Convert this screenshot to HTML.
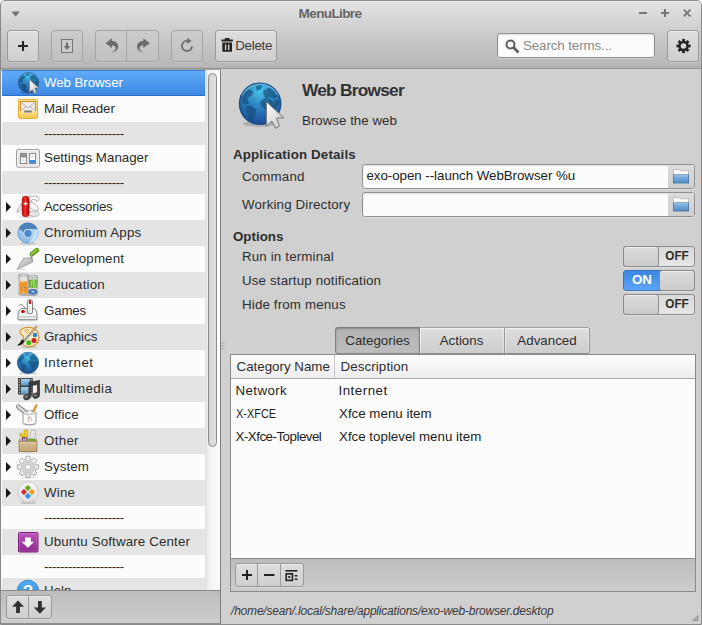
<!DOCTYPE html>
<html>
<head>
<meta charset="utf-8">
<title>MenuLibre</title>
<style>
*{box-sizing:border-box;margin:0;padding:0}
html,body{width:702px;height:625px;overflow:hidden;background:#fff}
body{font-family:"Liberation Sans",sans-serif;font-size:13.33px;color:#2e2e2e;position:relative}
.abs{position:absolute}
#win{position:absolute;left:0;top:0;width:702px;height:625px;border:1px solid #8a8a8a;border-radius:5px 5px 0 0;background:#d0d0d0;overflow:hidden}
#head{position:absolute;left:0;top:0;width:700px;height:67px;background:linear-gradient(#e3e3e3 0,#cbcbcb 33px,#b8b8b8 63px,#afafaf 67px);border-top:1px solid #ececec}
#headline{position:absolute;left:0;top:68px;width:700px;height:1px;background:#989898}
#title{position:absolute;left:0;top:5px;width:658px;text-align:center;font-weight:bold;font-size:13.6px;letter-spacing:-0.65px;color:#646464;line-height:16px;text-shadow:0 1px 0 rgba(255,255,255,.35)}
.btn{position:absolute;border:1px solid #9a9a9a;border-radius:3px;background:linear-gradient(#dedede,#cfcfcf);box-shadow:inset 0 1px 0 rgba(255,255,255,.45),0 1px 0 rgba(255,255,255,.25)}
.btn.dis{background:linear-gradient(#cdcdcd,#c0c0c0);border-color:#a4a4a4;box-shadow:0 1px 0 rgba(255,255,255,.2)}
.btn svg{position:absolute;left:-1px;top:-1px;overflow:visible}
.row{position:absolute;left:1px;width:204px;height:26px;line-height:26px;white-space:nowrap}
.row.sep{height:23px;line-height:24px;letter-spacing:-0.45px}
.row.g{background:#e4e4e4}
.row.w{background:#fcfcfc}
.row.sel{background:linear-gradient(#60aaf8,#3d89e5);border-bottom:1px solid #2a6ec6;border-top:1px solid #3a7ed2;line-height:24px}
.row.sel span{color:#fff;letter-spacing:-0.08px}
.row.sel .ic{top:0}
.row span{position:absolute;left:42px;top:0;color:#2c2c2c}
.row .ic{position:absolute;left:14px;top:1px;width:24px;height:24px}
.row .ar{position:absolute;left:4px;top:7.7px;width:0;height:0;border-left:5.6px solid #161616;border-top:5px solid transparent;border-bottom:5px solid transparent}
.lbl{position:absolute;white-space:nowrap;line-height:16px;color:#2e2e2e}
.b{font-weight:bold}
.entry{position:absolute;left:361px;width:333px;height:25px;border:1px solid #8f8f8f;border-radius:3px;background:#fcfcfc;box-shadow:inset 0 1px 2px rgba(0,0,0,.12),0 1px 0 rgba(255,255,255,.35)}
.entry .sec{position:absolute;right:0;top:0;width:26px;height:23px;background:linear-gradient(#dcdcdc,#cfcfcf);border-radius:0 2px 2px 0}
.sw{position:absolute;left:622px;width:72px;height:21px;border:1px solid #8d8d8d;border-radius:3px;background:linear-gradient(#d9d9d9,#e6e6e6);font-weight:bold;font-size:13.33px;line-height:18px;color:#2e2e2e;box-shadow:0 1px 0 rgba(255,255,255,.35)}
.sw .kn{position:absolute;top:-1px;width:36px;height:21px;border:1px solid #8d8d8d;border-radius:3px;background:linear-gradient(#dcdcdc,#cbcbcb);box-shadow:inset 0 1px 0 rgba(255,255,255,.5)}
.sw .tx{position:absolute;top:0;width:36px;text-align:center}
.tab{position:absolute;top:326px;height:27px;border:1px solid #929292;line-height:25px;text-align:center;color:#2e2e2e;background:linear-gradient(#dedede,#cdcdcd);border-color:#a0a0a0 #989898 #8e8e8e #989898;box-shadow:inset 0 1px 0 rgba(255,255,255,.6),inset 1px 0 0 rgba(255,255,255,.45),inset -1px 0 0 rgba(255,255,255,.3)}
</style>
</head>
<body>
<svg width="0" height="0" style="position:absolute"><defs>
<radialGradient id="gGlobe" cx="0.5" cy="0.18" r="0.85"><stop offset="0" stop-color="#4cc4ea"/><stop offset="0.4" stop-color="#2f8ac6"/><stop offset="0.75" stop-color="#2262a8"/><stop offset="1" stop-color="#1c4888"/></radialGradient>
<linearGradient id="gCur" x1="0" y1="0" x2="1" y2="1"><stop offset="0" stop-color="#ffffff"/><stop offset="1" stop-color="#c4c4c4"/></linearGradient>
<linearGradient id="gMail" x1="0" y1="0" x2="0" y2="1"><stop offset="0" stop-color="#f8cf58"/><stop offset="1" stop-color="#f0b028"/></linearGradient>
<linearGradient id="gTray" x1="0" y1="0" x2="0" y2="1"><stop offset="0" stop-color="#fce9a0"/><stop offset="1" stop-color="#f4c445"/></linearGradient>
<linearGradient id="gRed" x1="0" y1="0" x2="1" y2="0"><stop offset="0" stop-color="#c00808"/><stop offset="0.45" stop-color="#f03030"/><stop offset="1" stop-color="#b00000"/></linearGradient>
<radialGradient id="gChr" cx="0.5" cy="0.3" r="0.8"><stop offset="0" stop-color="#b8d8f2"/><stop offset="1" stop-color="#7fb2e0"/></radialGradient>
<linearGradient id="gFold" x1="0" y1="0" x2="0" y2="1"><stop offset="0" stop-color="#8dbbe6"/><stop offset="1" stop-color="#4f8cc4"/></linearGradient>
<linearGradient id="gPurp" x1="0" y1="0" x2="0" y2="1"><stop offset="0" stop-color="#bb55b8"/><stop offset="1" stop-color="#8d2690"/></linearGradient>
<linearGradient id="gBox" x1="0" y1="0" x2="0" y2="1"><stop offset="0" stop-color="#dcc6a0"/><stop offset="1" stop-color="#c0a070"/></linearGradient>
<linearGradient id="gHelp" x1="0" y1="0" x2="0" y2="1"><stop offset="0" stop-color="#56b0f4"/><stop offset="1" stop-color="#2a7fd4"/></linearGradient>
<linearGradient id="gGear" x1="0" y1="0" x2="0" y2="1"><stop offset="0" stop-color="#f7f7f7"/><stop offset="1" stop-color="#dedede"/></linearGradient>
<linearGradient id="gBlade" x1="0" y1="0" x2="1" y2="1"><stop offset="0" stop-color="#e2e2e2"/><stop offset="1" stop-color="#a8a8a8"/></linearGradient>
<linearGradient id="gFilm" x1="0" y1="0" x2="0" y2="1"><stop offset="0" stop-color="#a8d2ee"/><stop offset="1" stop-color="#5a96c4"/></linearGradient>
</defs></svg>
<div id="win">
<div id="head"></div>
<div id="title">MenuLibre</div>
<!-- titlebar glyphs -->
<svg class="abs" style="left:0;top:0" width="700" height="28">
<path d="M10.4 10.4h8.4l-4.2 5.4z" fill="#767676"/>
<path d="M638 12h8" stroke="#767676" stroke-width="2"/>
<path d="M660 12h8M664 8v8" stroke="#767676" stroke-width="2"/>
<path d="M682.8 8.7l6.6 6.6M689.4 8.7l-6.6 6.6" stroke="#767676" stroke-width="1.9"/>
</svg>

<!-- toolbar buttons -->
<div class="btn" style="left:6px;top:29px;width:32px;height:32px"><svg width="30" height="30"><path d="M11 16h10M16 11v10" stroke="#262626" stroke-width="2.1"/></svg></div>
<div class="btn dis" style="left:50px;top:29px;width:32px;height:32px"><svg width="30" height="30"><rect x="10.5" y="9.5" width="11" height="13" fill="#cbcbcb" stroke="#747474"/><path d="M15 12.5h2v3.5h2.4l-3.4 3.7-3.4-3.7h2.4z" fill="#6e6e6e"/></svg></div>
<div class="btn dis" style="left:94px;top:29px;width:64px;height:32px"><svg width="62" height="30">
<path d="M31.5 0v32" stroke="#a4a4a4"/>
<path d="M10.5 13.2L16.9 8.2V10.9C21 10.9 23.4 13.5 23.2 16.9C23 19.8 20.5 21.8 16.4 22.3C19.3 21.3 20.9 19.6 20.6 17.9C20.3 16.2 19 15.3 16.9 15.3V18.1Z" fill="#6c6c6c"/>
<path d="M10.5 13.2L16.9 8.2V10.9C21 10.9 23.4 13.5 23.2 16.9C23 19.8 20.5 21.8 16.4 22.3C19.3 21.3 20.9 19.6 20.6 17.9C20.3 16.2 19 15.3 16.9 15.3V18.1Z" fill="#6c6c6c" transform="translate(65.2 0) scale(-1 1)"/>
</svg></div>
<div class="btn dis" style="left:170px;top:29px;width:32px;height:32px"><svg width="30" height="30"><path d="M16.3 10.85A5.05 5.05 0 1 0 21.03 16.4" fill="none" stroke="#6e6e6e" stroke-width="1.9"/><path d="M16.1 7.8L20.6 10.9L16.1 13.9z" fill="#6e6e6e"/></svg></div>
<div class="btn" style="left:214px;top:29px;width:62px;height:32px"><svg width="60" height="30"><path d="M6.4 9.4h11.5v2.2h-11.5zM9.8 8h4.8v1.5h-4.8zM7.3 12.5h9.7v9.2h-9.7z" fill="#262626"/><path d="M10.6 14.5v5.5M13.7 14.5v5.5" stroke="#d6d6d6" stroke-width="1.3"/></svg><span class="lbl" style="left:19.3px;top:7px;color:#3a3a3a;letter-spacing:-0.3px">Delete</span></div>
<!-- search -->
<div class="abs" style="left:496px;top:32px;width:158px;height:25px;border:1px solid #8f8f8f;border-radius:3px;background:#fcfcfc;box-shadow:inset 0 1px 2px rgba(0,0,0,.12),0 1px 0 rgba(255,255,255,.35)">
<svg class="abs" style="left:5px;top:3px" width="18" height="18"><circle cx="7.5" cy="7.5" r="4" fill="none" stroke="#5e5e5e" stroke-width="2"/><path d="M10.5 10.5l5 5" stroke="#5e5e5e" stroke-width="2.6"/></svg>
<span class="lbl" style="left:25px;top:4px;color:#8a8a8a;letter-spacing:-0.1px">Search terms...</span></div>
<div class="btn" style="left:666px;top:29px;width:32px;height:32px"><svg width="30" height="30"><g transform="translate(16.5 16)" fill="#262626"><circle r="4" fill="none" stroke="#262626" stroke-width="2.4"/><rect x="-1.4" y="-7.1" width="2.8" height="3" transform="rotate(0)"/><rect x="-1.4" y="-7.1" width="2.8" height="3" transform="rotate(45)"/><rect x="-1.4" y="-7.1" width="2.8" height="3" transform="rotate(90)"/><rect x="-1.4" y="-7.1" width="2.8" height="3" transform="rotate(135)"/><rect x="-1.4" y="-7.1" width="2.8" height="3" transform="rotate(180)"/><rect x="-1.4" y="-7.1" width="2.8" height="3" transform="rotate(225)"/><rect x="-1.4" y="-7.1" width="2.8" height="3" transform="rotate(270)"/><rect x="-1.4" y="-7.1" width="2.8" height="3" transform="rotate(315)"/></g></svg></div>

<!-- left list -->
<div class="abs" style="left:0;top:67px;width:700px;height:1px;background:#949494"></div>
<div class="abs" style="left:0;top:68px;width:220px;height:555px;background:#a2a2a2;border-left:1px solid #929292"></div>
<div class="abs" id="list" style="left:0;top:69px;width:219px;height:520px;background:#fcfcfc;overflow:hidden">
<div class="row sel" style="top:0px"><svg class="ic" viewBox="0 0 24 24" ><ellipse cx="12.5" cy="21.49" rx="8.67" ry="1.43" fill="rgba(0,0,0,.16)"/><circle cx="12.5" cy="11.6" r="10.2" fill="url(#gGlobe)" stroke="#1d4f88" stroke-width="0.71"/><path d="M4.03 8.85 L4.95 5.99 L7.3 4.66 L8.93 5.79 L8.22 7.42 L6.58 8.13 L5.87 9.76 L6.79 11.4 L5.36 11.6 L3.73 10.48z" fill="#134a72" opacity="0.6" stroke="#134a72" stroke-width="0.51" stroke-linejoin="round"/><path d="M10.56 3.03 L13.11 2.52 L12.91 4.15 L11.07 4.87z" fill="#134a72" opacity="0.6" stroke="#134a72" stroke-width="0.51" stroke-linejoin="round"/><path d="M5.87 13.03 L8.01 12.62 L10.26 14.46 L9.85 16.8 L8.42 19.86 L7.5 19.35 L6.99 16.8 L5.77 14.97z" fill="#134a72" opacity="0.6" stroke="#134a72" stroke-width="0.51" stroke-linejoin="round"/><path d="M14.23 5.38 L16.89 3.95 L18.93 5.07 L20.86 7.93 L19.44 8.85 L17.29 8.13 L15.66 8.85 L14.54 7.42z" fill="#134a72" opacity="0.6" stroke="#134a72" stroke-width="0.51" stroke-linejoin="round"/><path d="M12.91 10.68 L14.74 9.05 L17.6 9.56 L19.44 11.6 L20.15 13.54 L18.62 16.7 L16.58 17.72 L15.56 14.66 L14.23 13.33 L12.91 12.11z" fill="#134a72" opacity="0.6" stroke="#134a72" stroke-width="0.51" stroke-linejoin="round"/><path d="M19.64 9.97 L21.78 9.76 L21.58 12.11 L20.35 13.03z" fill="#134a72" opacity="0.6" stroke="#134a72" stroke-width="0.51" stroke-linejoin="round"/><path d="M3.73 7.32A9.79 9.79 0 0 1 21.27 7.32" fill="none" stroke="rgba(160,220,250,.45)" stroke-width="0.61"/><path d="M13.3 8.2 L13.3 21.62 L16.27 18.87 L18.42 22.83 L20.51 21.51 L18.91 17.27 L22.87 17.05z" fill="url(#gCur)" stroke="#767676" stroke-width="0.8" stroke-linejoin="round"/></svg><span>Web Browser</span></div>
<div class="row w" style="top:26px"><svg class="ic" viewBox="0 0 24 24" ><rect x="2.5" y="2.4" width="19" height="19" rx="1.6" fill="url(#gMail)" stroke="#e0a21c" stroke-width="0.9"/>
<rect x="3.4" y="3.3" width="17.2" height="17.2" rx="1" fill="none" stroke="#fdeeb0" stroke-width="0.7"/>
<rect x="4.6" y="4.6" width="14.8" height="10" fill="#eeeeee" stroke="#cf8a28" stroke-width="1"/>
<path d="M5.5 5.5l6.5 5.5 6.5-5.5M5.5 13.5l5-4.2M18.5 13.5l-5-4.2" fill="none" stroke="#9c9c9c" stroke-width="0.8"/>
<path d="M3.3 13.9h4.8l0.6 2h6.6l0.6-2h4.8v6.7h-17.4z" fill="url(#gTray)"/>
<path d="M8.1 13.6h7.8l-0.6 2.1h-6.6z" fill="#7a7a7a"/><path d="M8.7 15.2h6.6l-0.2 0.7h-6.2z" fill="#c8c8c8"/></svg><span style="letter-spacing:-0.1px">Mail Reader</span></div>
<div class="row g sep" style="top:52px"><span>--------------------</span></div>
<div class="row w" style="top:75px"><svg class="ic" viewBox="0 0 24 24" ><rect x="1" y="20.5" width="22" height="1.5" rx="0.7" fill="rgba(0,0,0,.12)"/>
<rect x="0.5" y="3.5" width="23" height="17.5" rx="1.5" fill="#e6e6e6" stroke="#9c9c9c"/>
<rect x="1.5" y="4.5" width="21" height="15.5" rx="1" fill="none" stroke="#f8f8f8"/>
<rect x="4.5" y="7.5" width="6" height="10" fill="#fcfcfc" stroke="#8a8a8a"/><rect x="5" y="8" width="5" height="3.5" fill="#909090"/>
<rect x="13.5" y="7.5" width="6" height="10" fill="#fcfcfc" stroke="#8a8a8a"/><rect x="14" y="14" width="5" height="3.1" fill="#3f8ee0"/>
<rect x="6.3" y="13" width="2.4" height="2.4" fill="#e0e0e0"/><rect x="15.3" y="9.3" width="2.4" height="2.4" fill="#e0e0e0"/></svg><span>Settings Manager</span></div>
<div class="row g sep" style="top:101px"><span>--------------------</span></div>
<div class="row w" style="top:124px"><i class="ar"></i><svg class="ic" viewBox="0 0 24 24" ><ellipse cx="11" cy="22" rx="8" ry="1" fill="rgba(0,0,0,.13)"/>
<path d="M5.4 8.4L1.1 16V17.6L6.5 13.6z" fill="#f4f4f4" stroke="#909090" stroke-width="0.7" stroke-linejoin="round"/>
<path d="M13 1.2H21C22.8 1.3 23.3 3 22.7 4.6C22.2 5.8 21.2 6.5 20.4 6.4C20.6 5.4 20 4.7 19 4.7H16.5C15.6 4.9 15.1 5.6 15 6.8H13z" fill="#f6f6f6" stroke="#949494" stroke-width="0.7" stroke-linejoin="round"/>
<path d="M13 7.5L15.9 7.1C19 8.5 21.5 11 22.3 13.8L22 15.6C19.5 15.8 17.5 15.3 15.5 14L13 12z" fill="#f6f6f6" stroke="#949494" stroke-width="0.7" stroke-linejoin="round"/>
<path d="M13 16.9H21C22.5 17 23.2 18 23.1 19.2C23 20.3 22.6 20.9 21.5 21L16.8 21.2L13 20z" fill="#f6f6f6" stroke="#949494" stroke-width="0.7" stroke-linejoin="round"/>
<path d="M17.5 19h3.5" stroke="#b0b0b0" stroke-width="0.7"/>
<rect x="6.1" y="1" width="7" height="20.8" rx="3.5" fill="url(#gRed)" stroke="#a80000" stroke-width="0.5"/>
<path d="M9.6 6.6v4M7.6 8.6h4" stroke="#fff" stroke-width="1.2"/></svg><span style="letter-spacing:-0.32px">Accessories</span></div>
<div class="row g" style="top:150px"><i class="ar"></i><svg class="ic" viewBox="0 0 24 24" ><ellipse cx="12" cy="22.3" rx="8" ry="1.2" fill="rgba(0,0,0,.15)"/>
<circle cx="12" cy="12" r="10.2" fill="url(#gChr)" stroke="#6b9dce" stroke-width="0.8"/>
<path d="M2.8 7.5a10.2 10.2 0 0 1 18.6 0.5h-9.4a4.8 4.8 0 0 0-4.5 3.2z" fill="#4f82b8"/>
<path d="M21.4 8a10.2 10.2 0 0 1-8.4 14.2l4-7.5a4.8 4.8 0 0 0 0-5z" fill="#c4def4"/>
<circle cx="12" cy="12.5" r="4.6" fill="#d8e9f8"/>
<circle cx="12" cy="12.5" r="3.7" fill="#4f8ad0"/></svg><span style="letter-spacing:0.2px">Chromium Apps</span></div>
<div class="row w" style="top:176px"><i class="ar"></i><svg class="ic" viewBox="0 0 24 24" ><ellipse cx="6" cy="22.3" rx="5" ry="0.8" fill="rgba(0,0,0,.12)"/>
<path d="M1.1 22.3L7.6 11.3L15.5 10.7L16.8 13.3L16.6 15.1z" fill="url(#gBlade)" stroke="#8c8c8c" stroke-width="0.7" stroke-linejoin="round"/>
<path d="M15.8 11.5L15.3 7.4" stroke="#8a8a8a" stroke-width="1.5" fill="none" stroke-linecap="round"/>
<path d="M16 7L20.8 3.1" stroke="#5c9414" stroke-width="4.6" stroke-linecap="round"/>
<path d="M16.2 6.4L20.6 2.8" stroke="#8fc838" stroke-width="2.2" stroke-linecap="round"/>
<circle cx="15.6" cy="7.6" r="0.8" fill="#e8e8e8" stroke="#808080" stroke-width="0.5"/></svg><span style="letter-spacing:0.14px">Development</span></div>
<div class="row g" style="top:202px"><i class="ar"></i><svg class="ic" viewBox="0 0 24 24" ><ellipse cx="12" cy="21.8" rx="10" ry="1.3" fill="rgba(0,0,0,.2)"/>
<path d="M12.4 3.2h9v12l-0.8 1.5c1 1 1.2 2.5 1 4.3c-0.3 1-2 1.3-4.7 1.3s-4.4-0.3-4.7-1.3z" fill="#dadada" stroke="#848484" stroke-width="0.7" stroke-linejoin="round"/>
<rect x="13.2" y="6.6" width="7.5" height="8.2" fill="#5cac24"/><path d="M14.8 14.5l1.2-7.5M17 7l0.6 7.5M19.3 14.5l-0.8-7.5" stroke="#b4e884" stroke-width="0.9" fill="none"/>
<ellipse cx="16.9" cy="18.7" rx="4.3" ry="2.7" fill="#2c6cb4"/><rect x="15.3" y="17.7" width="3.4" height="2" fill="#a8c8ea"/>
<ellipse cx="16.9" cy="3.3" rx="4.5" ry="1" fill="#f0f0f0" stroke="#848484" stroke-width="0.6"/>
<rect x="3.1" y="1.6" width="8.8" height="19.6" rx="1" fill="#e2e2e2" stroke="#848484" stroke-width="0.7"/>
<rect x="3.8" y="8" width="7.4" height="12.4" fill="#f0921c"/><rect x="3.8" y="8" width="7.4" height="1.3" fill="#f8bc64"/><rect x="5.5" y="9.3" width="3" height="11.1" fill="#f6ac44" opacity="0.7"/>
<circle cx="7.3" cy="12.2" r="0.6" fill="#668"/><circle cx="8.6" cy="14.5" r="0.6" fill="#668"/><circle cx="6.5" cy="16.6" r="0.6" fill="#668"/><circle cx="6" cy="14.3" r="0.5" fill="#668"/>
<ellipse cx="7.5" cy="2" rx="4.8" ry="1" fill="#f4f4f4" stroke="#848484" stroke-width="0.6"/><path d="M2.2 1.8l1 0.6" stroke="#848484" stroke-width="0.6"/></svg><span style="letter-spacing:0.18px">Education</span></div>
<div class="row w" style="top:228px"><i class="ar"></i><svg class="ic" viewBox="0 0 24 24" ><ellipse cx="11.5" cy="21.5" rx="9.5" ry="1" fill="rgba(0,0,0,.12)"/>
<path d="M3.4 5.8c2.2-0.6 4.6 0.6 5.4 3.6" fill="none" stroke="#707070" stroke-width="0.8"/>
<path d="M5.6 9.6h13c1.4 0.8 2.4 3.5 2.4 6.5v4.6h-19v-4.6c0-3 1.4-5.8 3.6-6.5z" fill="#f4f4f4" stroke="#747474" stroke-width="0.9" stroke-linejoin="round"/>
<rect x="3" y="16.9" width="17" height="1.9" fill="#cfcfcf"/>
<rect x="11.3" y="1" width="5.2" height="13.6" rx="1.6" fill="#f6f6f6" stroke="#747474" stroke-width="0.9"/>
<rect x="12.5" y="7" width="1.2" height="7" fill="#d8d8d8"/>
<rect x="12.9" y="1.3" width="2.2" height="3.7" rx="0.5" fill="#d01414"/>
<ellipse cx="7" cy="12.5" rx="2" ry="1.5" fill="#c40808"/></svg><span style="letter-spacing:-0.2px">Games</span></div>
<div class="row g" style="top:254px"><i class="ar"></i><svg class="ic" viewBox="0 0 24 24" ><ellipse cx="13" cy="22" rx="8" ry="1" fill="rgba(0,0,0,.15)"/>
<path d="M13 2.2c6 0 10 4.5 10 10 0 6-4.5 9.5-10 9.5-4 0-6.5-2-6.5-4.5 0-2 1-3 1-5 0-2.5-3.5-2-3.5-5 0-3 4-5 9-5z" fill="#f6e7be" stroke="#cc9430" stroke-width="1.1"/>
<ellipse cx="10.8" cy="5.9" rx="1.7" ry="1.5" fill="#fcfcfc" stroke="#cc9430" stroke-width="0.9"/>
<circle cx="19" cy="10" r="2.3" fill="#3c78d8"/><circle cx="18" cy="15.6" r="2.5" fill="#d81c1c"/><circle cx="12.8" cy="17.8" r="2.5" fill="#3cb81c"/>
<path d="M20.8 1.3l-13.3 15.2" stroke="#7a7a7a" stroke-width="2"/><path d="M20.8 1.3l-7 8" stroke="#c8902c" stroke-width="1.6"/><path d="M20.8 1.3l-13.3 15.2" stroke="#e8e8e8" stroke-width="0.6"/>
<path d="M8.5 16l-2.5-1.5c-1.5 1.5-1.5 4-5 5.8 3 0.8 6.5-1 7.5-4.3z" fill="#1c1c1c"/></svg><span>Graphics</span></div>
<div class="row w" style="top:280px"><i class="ar"></i><svg class="ic" viewBox="0 0 24 24" ><ellipse cx="12" cy="22.08" rx="9.01" ry="1.48" fill="rgba(0,0,0,.16)"/><circle cx="12" cy="11.8" r="10.6" fill="url(#gGlobe)" stroke="#1d4f88" stroke-width="0.74"/><path d="M3.2 8.94 L4.16 5.97 L6.59 4.59 L8.29 5.76 L7.55 7.45 L5.85 8.2 L5.11 9.89 L6.06 11.59 L4.58 11.8 L2.88 10.63z" fill="#134a72" opacity="0.6" stroke="#134a72" stroke-width="0.53" stroke-linejoin="round"/><path d="M9.99 2.9 L12.64 2.37 L12.42 4.06 L10.52 4.8z" fill="#134a72" opacity="0.6" stroke="#134a72" stroke-width="0.53" stroke-linejoin="round"/><path d="M5.11 13.28 L7.34 12.86 L9.67 14.77 L9.24 17.21 L7.76 20.39 L6.81 19.86 L6.28 17.21 L5 15.3z" fill="#134a72" opacity="0.6" stroke="#134a72" stroke-width="0.53" stroke-linejoin="round"/><path d="M13.8 5.33 L16.56 3.85 L18.68 5.02 L20.69 7.98 L19.21 8.94 L16.98 8.2 L15.29 8.94 L14.12 7.45z" fill="#134a72" opacity="0.6" stroke="#134a72" stroke-width="0.53" stroke-linejoin="round"/><path d="M12.42 10.85 L14.33 9.15 L17.3 9.68 L19.21 11.8 L19.95 13.81 L18.36 17.1 L16.24 18.16 L15.18 14.98 L13.8 13.6 L12.42 12.33z" fill="#134a72" opacity="0.6" stroke="#134a72" stroke-width="0.53" stroke-linejoin="round"/><path d="M19.42 10.1 L21.65 9.89 L21.43 12.33 L20.16 13.28z" fill="#134a72" opacity="0.6" stroke="#134a72" stroke-width="0.53" stroke-linejoin="round"/><path d="M2.88 7.35A10.18 10.18 0 0 1 21.12 7.35" fill="none" stroke="rgba(160,220,250,.45)" stroke-width="0.64"/></svg><span style="letter-spacing:0.55px">Internet</span></div>
<div class="row g" style="top:306px"><i class="ar"></i><svg class="ic" viewBox="0 0 24 24" ><rect x="2" y="1" width="14.8" height="16.6" fill="#3e3e3e"/>
<rect x="4.9" y="1.9" width="9" height="6.7" fill="url(#gFilm)"/><rect x="4.9" y="10" width="9" height="6.9" fill="url(#gFilm)"/>
<path d="M3.4 2v15M15.4 2v15" stroke="#e0e0e0" stroke-width="0.9" stroke-dasharray="1.3 1.3"/>
<rect x="17.3" y="7.8" width="3.8" height="8" fill="rgba(255,255,255,.55)"/>
<path d="M12.8 5.3L23.7 3.2V18.5H21.3V7.6L15.3 8.8V19.8H12.8z" fill="#3c3c3c" stroke="#2a2a2a" stroke-width="0.5" stroke-linejoin="round"/>
<ellipse cx="10.9" cy="20.1" rx="3.5" ry="2.7" fill="#444" stroke="#2a2a2a" stroke-width="0.5" transform="rotate(-15 10.9 20.1)"/>
<ellipse cx="19.9" cy="18.7" rx="3.4" ry="2.7" fill="#444" stroke="#2a2a2a" stroke-width="0.5" transform="rotate(-15 19.9 18.7)"/>
<ellipse cx="10.3" cy="19.5" rx="1.8" ry="1.2" fill="#8a8a8a" opacity="0.8"/><ellipse cx="19.3" cy="18.1" rx="1.8" ry="1.2" fill="#8a8a8a" opacity="0.8"/></svg><span style="letter-spacing:0.38px">Multimedia</span></div>
<div class="row w" style="top:332px"><i class="ar"></i><svg class="ic" viewBox="0 0 24 24" ><ellipse cx="13.5" cy="21.8" rx="7" ry="1" fill="rgba(0,0,0,.14)"/>
<path d="M20.9 1.2L19.3 2.8L14.3 11.6L16 12.5L20.7 3.8z" fill="#d4901c" stroke="#a46a0c" stroke-width="0.5" stroke-linejoin="round"/>
<path d="M19.6 3.4L15.3 11.3" stroke="#f0c060" stroke-width="0.6"/>
<g transform="rotate(38 6 6.7)"><rect x="-0.8" y="4.7" width="13.6" height="4" rx="2" fill="#e4e4e4" stroke="#6e6e6e" stroke-width="0.8"/><rect x="1.2" y="5.7" width="10" height="2" rx="1" fill="#f8f8f8" stroke="#8a8a8a" stroke-width="0.6"/></g>
<path d="M7 9.3v10.2c0 1.3 2.9 2.1 6.5 2.1s6.5-0.8 6.5-2.1v-10.2" fill="rgba(252,252,252,.82)" stroke="#8c8c8c" stroke-width="0.9"/>
<ellipse cx="13.5" cy="9.4" rx="6.5" ry="1.9" fill="none" stroke="#a4a4a4" stroke-width="0.7"/>
<path d="M13.8 13l-1.3 6" stroke="#eccc98" stroke-width="1.4"/><path d="M12.3 13.5l-0.3 5" stroke="#e8b0b0" stroke-width="0.9"/><path d="M14.8 14l1 4" stroke="#a8c8ec" stroke-width="1"/><path d="M10 10.5l1.8 2.5" stroke="#a8c8ec" stroke-width="0.9"/></svg><span>Office</span></div>
<div class="row g" style="top:358px"><i class="ar"></i><svg class="ic" viewBox="0 0 24 24" ><ellipse cx="12" cy="22.8" rx="9.5" ry="0.8" fill="rgba(0,0,0,.12)"/>
<path d="M3.3 5l2.4-1.2 2.8 6-2.4 1.2z" fill="#e4c424" stroke="#c0a010" stroke-width="0.5"/>
<rect x="8" y="1" width="3.9" height="11" fill="#f0d030" stroke="#c4a414" stroke-width="0.6"/>
<path d="M9 2.5h1.8M9 4.5h1.8M9 6.5h1.8M9 8.5h1.8" stroke="#c8a818" stroke-width="0.5"/>
<path d="M13.5 9.5L15.3 1.2L20 1.7L18.2 10.5z" fill="#ececec" stroke="#9c9c9c" stroke-width="0.6" stroke-linejoin="round"/>
<path d="M14.6 4.8l4.6 0.5M14.2 6.8l4.5 0.5" stroke="#c8c8c8" stroke-width="0.5"/>
<rect x="6.2" y="8.2" width="5" height="4.5" rx="0.5" fill="#54247a"/><path d="M7.9 9v3.5M9.7 9v3.5" stroke="#f4f4f4" stroke-width="1"/>
<rect x="12.2" y="10" width="6.8" height="2.8" rx="0.4" fill="#72b424" stroke="#4c8a10" stroke-width="0.5"/>
<path d="M4 9.8l-0.9 2v10.7h17.8v-10.7l-0.9-2l-0.3 2.5h-15.4z" fill="#c8a878" stroke="#9a7844" stroke-width="0.6" stroke-linejoin="round"/>
<rect x="3.2" y="12.3" width="17.6" height="10.2" fill="url(#gBox)" stroke="#9a7844" stroke-width="0.7"/>
<rect x="4" y="13.1" width="16" height="8.6" fill="none" stroke="rgba(255,255,255,.2)" stroke-width="0.6"/></svg><span style="letter-spacing:0.3px">Other</span></div>
<div class="row w" style="top:384px"><i class="ar"></i><svg class="ic" viewBox="0 0 24 24" ><ellipse cx="12" cy="22.5" rx="8" ry="0.9" fill="rgba(0,0,0,.1)"/>
<path d="M9.87 1.21 L14.13 1.21 L14 3.84 L16.28 4.79 L18.06 2.84 L21.06 5.84 L19.11 7.62 L20.06 9.9 L22.69 9.77 L22.69 14.03 L20.06 13.9 L19.11 16.18 L21.06 17.96 L18.06 20.96 L16.28 19.01 L14 19.96 L14.13 22.59 L9.87 22.59 L10 19.96 L7.72 19.01 L5.94 20.96 L2.94 17.96 L4.89 16.18 L3.94 13.9 L1.31 14.03 L1.31 9.77 L3.94 9.9 L4.89 7.62 L2.94 5.84 L5.94 2.84 L7.72 4.79 L10 3.84z" fill="url(#gGear)" stroke="#9e9e9e" stroke-width="0.8" stroke-linejoin="round"/>
<circle cx="12" cy="11.9" r="6.5" fill="#d8d8d8" stroke="#b4b4b4" stroke-width="0.7"/>
<circle cx="12" cy="11.9" r="4.6" fill="none" stroke="#cccccc" stroke-width="0.8"/>
<circle cx="12" cy="11.9" r="2.8" fill="#fdfdfd" stroke="#a8a8a8" stroke-width="0.7"/></svg><span style="letter-spacing:0.08px">System</span></div>
<div class="row g" style="top:410px"><i class="ar"></i><svg class="ic" viewBox="0 0 24 24" ><ellipse cx="12.2" cy="21.6" rx="8" ry="1.5" fill="rgba(0,0,0,.15)"/>
<circle cx="12.2" cy="11.2" r="10.4" fill="url(#gGear)" stroke="#c0c0c0" stroke-width="0.8"/>
<path d="M11.9 3.9l3 3-3 3-3-3z" fill="#6aa822" stroke="#8cc040" stroke-width="0.4"/>
<path d="M7.9 7.9l3 3-3 3-3-3z" fill="#d42c2c" stroke="#e86060" stroke-width="0.4"/>
<path d="M15.9 7.9l3 3-3 3-3-3z" fill="#f0961c" stroke="#f8b850" stroke-width="0.4"/>
<path d="M11.9 11.9l3 3-3 3-3-3z" fill="#2c92e2" stroke="#60b0f0" stroke-width="0.4"/></svg><span style="letter-spacing:0.2px">Wine</span></div>
<div class="row w sep" style="top:436px"><span>--------------------</span></div>
<div class="row g" style="top:459px"><svg class="ic" viewBox="0 0 24 24" ><rect x="2.5" y="2.5" width="19.5" height="19.5" rx="1" fill="url(#gPurp)" stroke="#7a1c7c"/>
<rect x="3.5" y="3.5" width="17.5" height="17.5" fill="none" stroke="rgba(255,255,255,.18)"/>
<path d="M9 7.5h5.8v4.3h3.4l-6.3 6-6.3-6h3.4z" fill="#fff"/></svg><span style="letter-spacing:0.14px">Ubuntu Software Center</span></div>
<div class="row w sep" style="top:485px"><span>--------------------</span></div>
<div class="row g" style="top:508px"><svg class="ic" viewBox="0 0 24 24" ><circle cx="12" cy="12" r="10.8" fill="url(#gHelp)" stroke="#2a78c8" stroke-width="0.8"/>
<text x="12" y="18" font-family="Liberation Sans, sans-serif" font-weight="bold" font-size="17" text-anchor="middle" fill="#fff">?</text></svg><span>Help</span></div>
<!-- scrollbar -->
<div class="abs" style="left:204px;top:0;width:15px;height:520px;background:linear-gradient(90deg,#dedede,#f2f2f2 4px,#fafafa 12px,#fdfdfd)"></div>
<div class="abs" style="left:207px;top:3px;width:9px;height:374px;border:1px solid #8c8c8c;border-radius:5px;background:linear-gradient(90deg,#d4d4d4,#e0e0e0)"></div>
</div>
<div class="abs" style="left:219px;top:69px;width:1px;height:555px;background:#7e7e7e"></div>
<div class="abs" style="left:0;top:589px;width:219px;height:1px;background:#8a8a8a"></div>
<div class="abs" style="left:0;top:590px;width:219px;height:32px;background:linear-gradient(#bdbdbd,#cdcdcd)"></div>
<div class="abs" style="left:0;top:622px;width:220px;height:1px;background:#8e8e8e"></div>
<div class="btn" style="left:5px;top:594px;width:46px;height:24px"><svg width="44" height="23"><path d="M22.5 0v23" stroke="#9a9a9a"/><path d="M12 5.6L18 11.8H13.9V18H10.1V11.8H6z" fill="#303030"/><path d="M33.9 18.7L39.9 12.5H35.8V6H32V12.5H27.9z" fill="#303030"/></svg></div>
<!-- pane handle -->
<svg class="abs" style="left:220px;top:341px" width="5" height="10"><path d="M0 1h3.4M0 4h3.4M0 7h3.4" stroke="#b6b6b6" stroke-width="1.5"/></svg>

<!-- right panel -->
<div class="lbl b" style="left:301px;top:79px;font-size:17.3px;line-height:20px;color:#333;letter-spacing:-0.75px">Web Browser</div>
<div class="lbl" style="left:301px;top:112px">Browse the web</div>
<div class="lbl b" style="left:232px;top:146px;letter-spacing:0.15px">Application Details</div>
<div class="lbl" style="left:241px;top:168px;letter-spacing:0.15px">Command</div>
<div class="lbl" style="left:241px;top:196px;letter-spacing:0.15px">Working Directory</div>
<div class="entry" style="top:163px"><span class="lbl" style="left:3.5px;top:3px;color:#222;letter-spacing:-0.05px">exo-open --launch WebBrowser %u</span><div class="sec"><svg class="abs" style="left:4px;top:3px" width="18" height="16" viewBox="0 0 18 16"><path d="M1.4 1.5h5.8l1 1.2h8.4v4.5h-15.2z" fill="#fbfbfb" stroke="#b4b4b4" stroke-width="0.8"/><rect x="1.4" y="6.9" width="15.2" height="8.1" fill="url(#gFold)" stroke="#3f70a2" stroke-width="0.8"/><path d="M2 7.7h14" stroke="#a8cdee" stroke-width="0.8"/></svg></div></div>
<div class="entry" style="top:191px"><div class="sec"><svg class="abs" style="left:4px;top:3px" width="18" height="16" viewBox="0 0 18 16"><path d="M1.4 1.5h5.8l1 1.2h8.4v4.5h-15.2z" fill="#fbfbfb" stroke="#b4b4b4" stroke-width="0.8"/><rect x="1.4" y="6.9" width="15.2" height="8.1" fill="url(#gFold)" stroke="#3f70a2" stroke-width="0.8"/><path d="M2 7.7h14" stroke="#a8cdee" stroke-width="0.8"/></svg></div></div>
<div class="lbl b" style="left:232px;top:228px">Options</div>
<div class="lbl" style="left:241px;top:248px;letter-spacing:0.15px">Run in terminal</div>
<div class="lbl" style="left:241px;top:272px;letter-spacing:0.15px">Use startup notification</div>
<div class="lbl" style="left:241px;top:296px;letter-spacing:0.15px">Hide from menus</div>
<div class="sw" style="top:245px"><div class="kn" style="left:-1px"></div><div class="tx" style="left:35px;transform:scaleX(0.88)">OFF</div></div>
<div class="sw" style="top:269px;background:linear-gradient(#3c85e1,#5ca6f5);border-color:#3a74c0"><div class="tx" style="left:0;color:#fff">ON</div><div class="kn" style="left:35px"></div></div>
<div class="sw" style="top:293px"><div class="kn" style="left:-1px"></div><div class="tx" style="left:35px;transform:scaleX(0.88)">OFF</div></div>

<!-- tabs -->
<div class="tab" style="left:418px;width:86px;text-indent:-1px">Actions</div>
<div class="tab" style="left:503px;width:86px;border-radius:0 3px 3px 0">Advanced</div>
<div class="tab" style="left:334px;width:85px;border-radius:3px 0 0 3px;border-color:#7e7e7e #868686 #8a8a8a #7e7e7e;background:linear-gradient(#b2b2b2,#bebebe);box-shadow:inset 0 1px 2px rgba(0,0,0,.22)">Categories</div>

<!-- treeview -->
<div class="abs" style="left:229px;top:353px;width:466px;height:238px;border:1px solid #8a8a8a;background:#fcfcfc">
<div class="abs" style="left:0;top:0;width:464px;height:24px;background:linear-gradient(#fdfdfd,#ededed);border-bottom:1px solid #a8a8a8"></div>
<div class="abs" style="left:103px;top:0;width:1px;height:23px;background:#c6c6c6"></div>
<span class="lbl" style="left:5.5px;top:4px">Category Name</span>
<span class="lbl" style="left:109.5px;top:4px;letter-spacing:0.1px">Description</span>
<span class="lbl" style="left:4.5px;top:28px;color:#1e1e1e;letter-spacing:0.4px">Network</span><span class="lbl" style="left:107.5px;top:28px;color:#1e1e1e;letter-spacing:0.5px">Internet</span>
<span class="lbl" style="left:4.5px;top:51px;color:#1e1e1e;transform:scaleX(0.82);transform-origin:0 0">X-XFCE</span><span class="lbl" style="left:108px;top:51px;color:#1e1e1e">Xfce menu item</span>
<span class="lbl" style="left:4.5px;top:74px;color:#1e1e1e;letter-spacing:-0.5px">X-Xfce-Toplevel</span><span class="lbl" style="left:108px;top:74px;color:#1e1e1e">Xfce toplevel menu item</span>
<div class="abs" style="left:0;top:203px;width:464px;height:33px;background:linear-gradient(#bdbdbd,#cdcdcd);border-top:1px solid #8a8a8a"></div>
</div>
<div class="btn" style="left:234px;top:562px;width:69px;height:24px"><svg width="67" height="22"><path d="M22.5 0v24M45.5 0v24" stroke="#9a9a9a"/><path d="M7 12h10M12 7v10" stroke="#222" stroke-width="2"/><path d="M29 12h10.4" stroke="#222" stroke-width="2"/><path d="M50.4 7.8h12" stroke="#222" stroke-width="1.6"/><rect x="51.2" y="10.8" width="6.2" height="6.6" fill="none" stroke="#222" stroke-width="1.6"/><path d="M53.3 13.1h2v2h-2zM59.6 11.9h2.8v1.6h-2.8zM59.6 15.4h2.8v1.6h-2.8z" fill="#222"/></svg></div>
<div class="lbl" style="left:230px;top:602px;font-style:italic;font-size:12px;letter-spacing:-0.2px;color:#3a3a3a">/home/sean/.local/share/applications/exo-web-browser.desktop</div>
<svg class="abs" style="left:686px;top:610px" width="13" height="13"><path d="M5.8 9.5h5.2v-5z" fill="#b2b2b2" stroke="#8c8c8c" stroke-width="0.9" stroke-linejoin="round"/></svg>
<svg class="abs" style="left:236px;top:79px" width="52" height="52" viewBox="0 0 26 26"><ellipse cx="11.55" cy="21.89" rx="8.76" ry="1.44" fill="rgba(0,0,0,.16)"/><circle cx="11.55" cy="11.9" r="10.3" fill="url(#gGlobe)" stroke="#1d4f88" stroke-width="0.72"/><path d="M3 9.12 L3.93 6.23 L6.3 4.9 L7.95 6.03 L7.22 7.68 L5.58 8.4 L4.86 10.05 L5.78 11.69 L4.34 11.9 L2.69 10.77z" fill="#134a72" opacity="0.6" stroke="#134a72" stroke-width="0.52" stroke-linejoin="round"/><path d="M9.59 3.25 L12.17 2.73 L11.96 4.38 L10.11 5.1z" fill="#134a72" opacity="0.6" stroke="#134a72" stroke-width="0.52" stroke-linejoin="round"/><path d="M4.86 13.34 L7.02 12.93 L9.28 14.78 L8.87 17.15 L7.43 20.24 L6.5 19.73 L5.99 17.15 L4.75 15.3z" fill="#134a72" opacity="0.6" stroke="#134a72" stroke-width="0.52" stroke-linejoin="round"/><path d="M13.3 5.62 L15.98 4.17 L18.04 5.31 L20 8.19 L18.55 9.12 L16.39 8.4 L14.74 9.12 L13.61 7.68z" fill="#134a72" opacity="0.6" stroke="#134a72" stroke-width="0.52" stroke-linejoin="round"/><path d="M11.96 10.97 L13.82 9.32 L16.7 9.84 L18.55 11.9 L19.28 13.86 L17.73 17.05 L15.67 18.08 L14.64 14.99 L13.3 13.65 L11.96 12.42z" fill="#134a72" opacity="0.6" stroke="#134a72" stroke-width="0.52" stroke-linejoin="round"/><path d="M18.76 10.25 L20.92 10.05 L20.72 12.42 L19.48 13.34z" fill="#134a72" opacity="0.6" stroke="#134a72" stroke-width="0.52" stroke-linejoin="round"/><path d="M2.69 7.57A9.89 9.89 0 0 1 20.41 7.57" fill="none" stroke="rgba(160,220,250,.45)" stroke-width="0.62"/><path d="M14.7 10.85 L14.7 23.05 L17.4 20.55 L19.35 24.15 L21.25 22.95 L19.8 19.1 L23.4 18.9z" fill="url(#gCur)" stroke="#767676" stroke-width="0.5" stroke-linejoin="round"/></svg>
</div>
</body>
</html>
